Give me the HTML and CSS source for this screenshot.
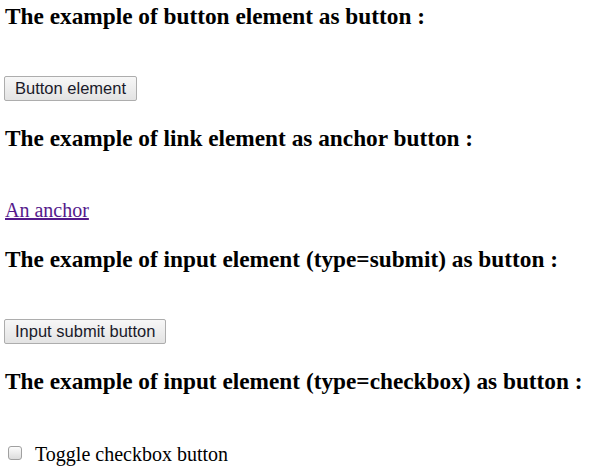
FILE: index.html
```html
<!DOCTYPE html>
<html>
<head>
<meta charset="utf-8">
<link rel="stylesheet" href="styles.css">
</head>
<body>
<section class="block">
  <h3 class="title">The example of button element as button :</h3>
  <div class="demo"><button class="btn" type="button">Button element</button></div>
</section>
<section class="block">
  <h3 class="title">The example of link element as anchor button :</h3>
  <div class="demo"><a class="anchor" href="#">An anchor</a></div>
</section>
<section class="block">
  <h3 class="title">The example of input element (type=submit) as button :</h3>
  <div class="demo"><input class="btn" type="submit" value="Input submit button"></div>
</section>
<section class="block">
  <h3 class="title">The example of input element (type=checkbox) as button :</h3>
  <div class="demo demo-check"><label class="check"><span class="box"></span><span>Toggle checkbox button</span></label></div>
</section>
</body>
</html>
```

FILE: styles.css
```css
html, body {
  margin: 0;
  padding: 0;
  background: #fff;
}
body {
  padding: 3px 0 0 5px;
  font-family: "Liberation Serif", "Times New Roman", serif;
  color: #000;
}
.block {
  height: 121.7px;
}
.title {
  margin: 0;
  font-size: 23.3px;
  font-weight: bold;
  line-height: 27px;
  color: #000;
}
.demo {
  margin-top: 46px;
  display: flex;
  align-items: flex-start;
}
.demo-check {
  margin-top: 47px;
}
.btn {
  font-family: "Liberation Sans", Arial, sans-serif;
  font-size: 16.5px;
  color: #1a1a2a;
  height: 25px;
  padding: 0 10px;
  margin: 0 0 0 -1px;
  border: 1px solid #adadad;
  border-radius: 2px;
  background: linear-gradient(#f7f7f7, #e3e3e3);
}
.anchor {
  font-size: 20px;
  line-height: 24px;
  color: #551a8b;
  text-decoration: underline;
}
.check {
  display: flex;
  align-items: flex-start;
  gap: 13px;
  font-size: 20px;
  line-height: 24px;
  padding-left: 3px;
}
.box {
  width: 14px;
  height: 14px;
  margin-top: 4px;
  border: 1px solid #a0a0a0;
  border-radius: 3px;
  background: linear-gradient(#fcfcfc, #dcdcdc);
  box-sizing: border-box;
}
```
